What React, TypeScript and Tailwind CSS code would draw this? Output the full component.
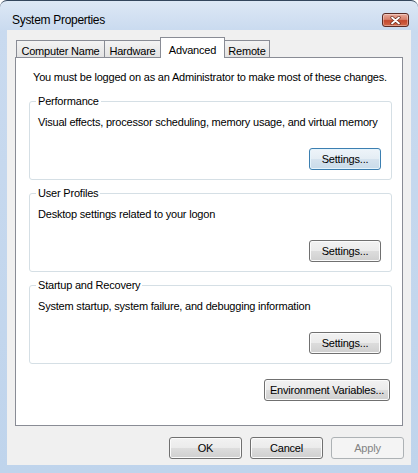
import type { ReactNode } from 'react'

type BtnProps = {
  children: ReactNode
  className?: string
  focused?: boolean
  disabled?: boolean
}

// Aero-style push button
function Button({ children, className = '', focused = false, disabled = false }: BtnProps) {
  let look =
    'border-[#707070] text-black bg-[linear-gradient(#f2f2f2_0%,#ebebeb_50%,#dddddd_50%,#cfcfcf_100%)] shadow-[inset_0_0_0_1px_#fbfbfb]'
  if (focused) {
    look =
      'border-[#3c7fb1] text-black bg-[linear-gradient(#eef4f9_0%,#e4edf4_50%,#d6e3ee_50%,#c9dbe9_100%)] shadow-[inset_0_0_0_1px_#e5f4fc]'
  }
  if (disabled) {
    look = 'border-[#adb2b5] text-[#838383] bg-[#f4f4f4]'
  }
  return (
    <button
      type="button"
      className={`h-[22px] rounded-[3px] border text-[11px] leading-[15px] tracking-[-0.2px] ${look} ${className}`}>
      {children}
    </button>
  )
}

function Tab({ label, width, active = false }: { label: string; width: string; active?: boolean }) {
  if (active) {
    return (
      <div
        className={`relative z-10 -mb-px -ml-px h-[21px] border border-b-0 border-[#898c95] bg-white pt-[4px] text-center ${width}`}>
        {label}
      </div>
    )
  }
  return (
    <div
      className={`-ml-px h-[17px] border border-b-0 border-[#898c95] bg-[linear-gradient(#f3f3f3,#e3e3e3)] pt-[2px] text-center first:ml-0 ${width}`}>
      {label}
    </div>
  )
}

function Group({ title, text, focused = false }: { title: string; text: string; focused?: boolean }) {
  return (
    <fieldset className="rounded-[3px] border border-[#d5dfe5] pr-[10px] pb-[9px] pl-[8px]">
      <legend className="-ml-[2px] px-[2px] leading-[15px]">{title}</legend>
      <p className="pt-[6px] leading-[15px]">{text}</p>
      <div className="mt-[18px] flex justify-end">
        <Button focused={focused} className="w-[72px]">
          Settings...
        </Button>
      </div>
    </fieldset>
  )
}

export default function App() {
  return (
    <div className="h-[473px] w-[418px] overflow-hidden bg-white font-['Liberation_Sans',Arial,sans-serif] text-[11px] tracking-[-0.2px] text-black">
      <div className="flex h-full flex-col rounded-t-[7px] border-t border-[#34465c] bg-[linear-gradient(#dde8f5_0px,#c9daef_30px,#bfd4ec_100%)]">
        {/* Title bar */}
        <div className="flex h-[29px] shrink-0 items-center justify-between pt-[9px] pr-[9px] pl-[12px]">
          <span className="text-[12px] tracking-[-0.3px]">System Properties</span>
          <div className="flex h-[14px] w-[27px] items-center justify-center rounded-[3px] border border-[#5b2b25] bg-[linear-gradient(#e9a99a_0%,#d6806b_45%,#c4482d_55%,#d2694a_100%)] shadow-[inset_0_0_0_1px_rgba(255,255,255,0.35)]">
            <svg width="11" height="9" viewBox="0 0 11 9">
              <path d="M2 1.5 L9 7.5 M9 1.5 L2 7.5" stroke="#6b2a1c" strokeWidth="3.2" strokeLinecap="round" />
              <path d="M2 1.5 L9 7.5 M9 1.5 L2 7.5" stroke="#ffffff" strokeWidth="1.8" strokeLinecap="round" />
            </svg>
          </div>
        </div>

        {/* Client area */}
        <div className="mx-[7px] mb-[8px] flex flex-1 flex-col bg-[#f0f0f0]">
          <div className="flex h-[27px] items-end pl-[9px]">
            <Tab label="Computer Name" width="w-[89px]" />
            <Tab label="Hardware" width="w-[57px]" />
            <Tab label="Advanced" width="w-[65px]" active />
            <Tab label="Remote" width="w-[46px]" />
          </div>

          <div className="mx-[8px] h-[369px] border border-[#898c95] bg-white pt-[12px] pr-[10px] pl-[13px]">
            <p className="ml-[4px] leading-[15px]">
              You must be logged on as an Administrator to make most of these changes.
            </p>
            <div className="mt-[9px] flex flex-col gap-[6px]">
              <Group
                title="Performance"
                text="Visual effects, processor scheduling, memory usage, and virtual memory"
                focused
              />
              <Group title="User Profiles" text="Desktop settings related to your logon" />
              <Group title="Startup and Recovery" text="System startup, system failure, and debugging information" />
            </div>
            <div className="mt-[15px] flex justify-end pr-[2px]">
              <Button className="w-[126px]">Environment Variables...</Button>
            </div>
          </div>

          <div className="mt-[11px] flex justify-end gap-[8px] pr-[7px]">
            <Button className="w-[73px]">OK</Button>
            <Button className="w-[73px]">Cancel</Button>
            <Button className="w-[73px]" disabled>
              Apply
            </Button>
          </div>
        </div>
      </div>
    </div>
  )
}
